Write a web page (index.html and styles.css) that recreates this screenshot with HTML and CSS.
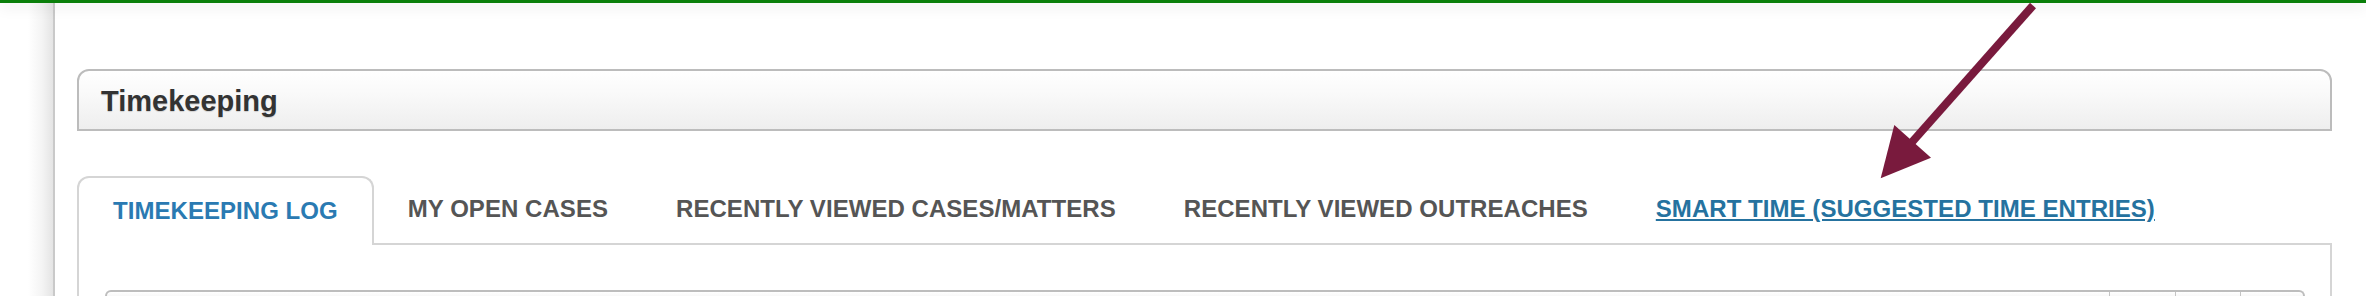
FILE: index.html
```html
<!DOCTYPE html>
<html lang="en">
<head>
<meta charset="utf-8">
<title>Timekeeping</title>
<link rel="stylesheet" href="styles.css">
</head>
<body>
<div class="topbar"></div>
<div class="layout">
  <aside class="sidebar"></aside>
  <main class="page">
    <section class="panel-header">
      <h1 class="panel-title">Timekeeping</h1>
    </section>
    <nav class="tabs">
      <ul class="tab-list">
        <li class="tab active">TIMEKEEPING LOG</li>
        <li class="tab">MY OPEN CASES</li>
        <li class="tab">RECENTLY VIEWED CASES/MATTERS</li>
        <li class="tab">RECENTLY VIEWED OUTREACHES</li>
        <li class="tab"><a class="tab-link" href="#">SMART TIME (SUGGESTED TIME ENTRIES)</a></li>
      </ul>
    </nav>
    <div class="tab-content">
      <div class="grid-head">
        <div class="col col-main"></div>
        <div class="col col-a"></div>
        <div class="col col-b"></div>
        <div class="col col-c"></div>
      </div>
    </div>
  </main>
</div>
<svg class="arrow" width="175" height="185" viewBox="0 0 175 185" aria-hidden="true">
  <line x1="163" y1="5.5" x2="40" y2="144.3" stroke="#791a3d" stroke-width="8" stroke-linecap="butt"/>
  <polygon points="10.7,178.3 24.3,125 61,157.7" fill="#791a3d"/>
</svg>
</body>
</html>
```
FILE: styles.css
```css
* { box-sizing: border-box; }

html, body {
  margin: 0;
  padding: 0;
  height: 296px;
  overflow: hidden;
  background: #ffffff;
  font-family: "Liberation Sans", Arial, Helvetica, sans-serif;
}

.topbar {
  position: relative;
  z-index: 2;
  height: 3px;
  background: #0a7f0a;
  box-shadow: 0 3px 14px rgba(0, 0, 0, 0.17);
}

.layout {
  display: flex;
  height: 293px;
  overflow: hidden;
}

.sidebar {
  width: 53px;
  flex: none;
  background: linear-gradient(to right, #ffffff 0px, #ffffff 28px, #f4f4f4 42px, #e4e4e4 53px);
}

.page {
  flex: 1;
  border-left: 2px solid #c9c9c9;
  padding: 66px 34px 0 22px;
  background: #ffffff;
}

.panel-header {
  height: 62px;
  border: 2px solid #bcbcbc;
  border-radius: 12px 12px 0 0;
  background: linear-gradient(to bottom, #ffffff 0%, #f9f9f9 40%, #eeeeee 100%);
  padding: 3px 0 0 22px;
}

.panel-title {
  margin: 0;
  font-size: 29px;
  line-height: 55px;
  font-weight: bold;
  color: #333333;
  text-shadow: 0 1px 1px rgba(0, 0, 0, 0.15);
}

.tabs {
  margin-top: 45px;
}

.tab-list {
  display: flex;
  align-items: flex-end;
  margin: 0;
  padding: 0;
  list-style: none;
  border-bottom: 2px solid #d5d5d5;
}

.tab {
  margin-bottom: -2px;
  padding: 16px 34px 21px;
  border-top: 2px solid transparent;
  line-height: 30px;
  font-size: 24px;
  font-weight: bold;
  letter-spacing: 0.05px;
  color: #555555;
  white-space: nowrap;
}

.tab.active {
  padding: 18px 34px 19px;
  border: 2px solid #d5d5d5;
  border-bottom: none;
  border-radius: 12px 12px 0 0;
  background: #ffffff;
  color: #2a7ab2;
}

.tab-link {
  color: #25729f;
  text-decoration: underline;
}

.tab-content {
  height: 51px;
  border-left: 2px solid #d5d5d5;
  border-right: 2px solid #d5d5d5;
  padding: 45px 25px 0 26px;
  overflow: hidden;
}

.grid-head {
  display: grid;
  grid-template-columns: 1fr 66px 65px 63px;
  height: 6px;
  border: 2px solid #bdbdbd;
  border-bottom: none;
  border-radius: 8px 8px 0 0;
  background: linear-gradient(to bottom, #ffffff, #f8f8f8);
}

.col + .col {
  border-left: 1px solid #c4c4c4;
}

.arrow {
  position: absolute;
  left: 1870px;
  top: 0;
  z-index: 3;
}
```
